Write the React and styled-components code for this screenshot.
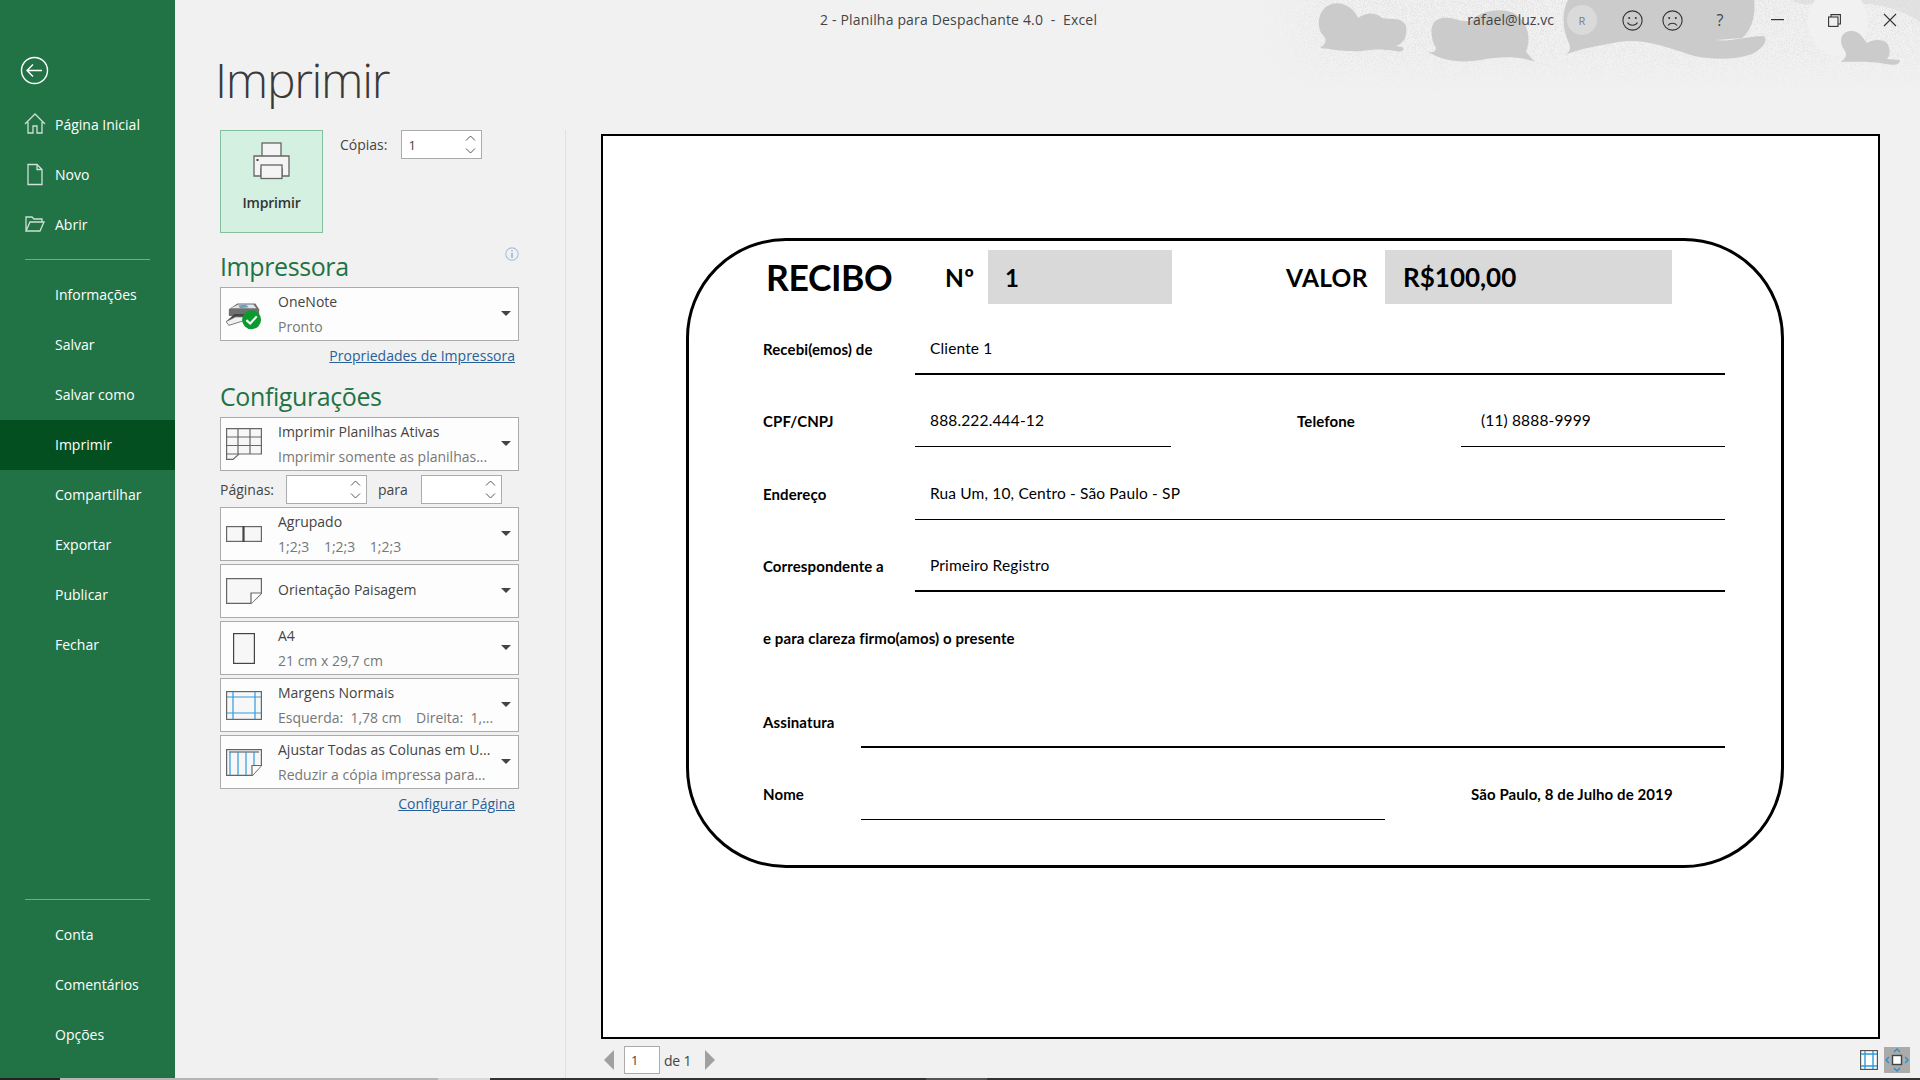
import React from "react";
import styled, { createGlobalStyle } from "styled-components";

const GlobalStyle = createGlobalStyle`
  html, body {
    margin: 0;
    padding: 0;
    background: #f1f1f1;
    overflow: hidden;
  }
  * {
    box-sizing: border-box;
  }
`;

const UI_FONT = `"Open Sans", "Noto Sans", sans-serif`;
const SHEET_FONT = `"Lato", "Liberation Sans", sans-serif`;

const Window = styled.div`
  width: 1920px;
  height: 1080px;
  display: flex;
  flex-direction: column;
  font-family: ${UI_FONT};
  color: #444;
  background: #f1f1f1;
`;

const Main = styled.div`
  flex: 1;
  display: flex;
  min-height: 0;
`;

const TaskStrip = styled.div`
  height: 2px;
  display: flex;
  background: #333;
`;

const StripPart = styled.div`
  width: ${(p) => p.$width}px;
  background: ${(p) => p.$color};
`;

/* sidebar */
const Sidebar = styled.nav`
  width: 175px;
  flex: none;
  display: flex;
  flex-direction: column;
  background: #217346;
  padding-bottom: 18px;
`;

const BackButton = styled.div`
  height: 100px;
  padding: 56px 0 0 20px;
  color: #fff;
`;

const NavRow = styled.div`
  height: 50px;
  display: flex;
  align-items: center;
  position: relative;
  padding: 0 0 2px 55px;
  font-size: 14px;
  color: #fff;
  background: ${(p) => (p.$active ? "#034f20" : "transparent")};
`;

const NavIcon = styled.svg`
  position: absolute;
  left: 24px;
  top: 12px;
`;

const NavDivider = styled.div`
  height: 1px;
  background: #72ab8b;
  margin: ${(p) => p.$margin};
`;

const BottomNav = styled.div`
  margin-top: auto;
`;

/* content */
const Content = styled.div`
  flex: 1;
  display: flex;
  flex-direction: column;
  position: relative;
  min-width: 0;
`;

const CloudArt = styled.svg`
  position: absolute;
  top: 0;
  right: 0;
`;

const TitleBar = styled.header`
  height: 40px;
  display: flex;
  align-items: center;
  position: relative;
  padding: 0 2px 0 645px;
  font-size: 14px;
  letter-spacing: 0.17px;
`;

const WindowTitle = styled.div`
  white-space: pre;
  margin-bottom: 2px;
`;

const TitleActions = styled.div`
  margin-left: auto;
  display: flex;
  align-items: center;
`;

const Account = styled.div`
  margin: 0 13px 2px 0;
  font-size: 14px;
  letter-spacing: 0.05px;
`;

const Avatar = styled.div`
  width: 30px;
  height: 30px;
  border-radius: 50%;
  background: #dadada;
  color: #6f8296;
  font-size: 11px;
  display: flex;
  align-items: center;
  justify-content: center;
`;

const TitleAction = styled.div`
  width: ${(p) => p.$width}px;
  margin-left: ${(p) => p.$left || 0}px;
  height: 30px;
  display: flex;
  align-items: center;
  justify-content: center;
  color: #444;
  font-size: 16px;
`;

const PageHeading = styled.h1`
  height: 90px;
  margin: 0;
  padding: 10px 0 0 40px;
  font-size: 48px;
  line-height: 60px;
  font-weight: 300;
  letter-spacing: -1.3px;
  color: #3a3a3a;
`;

const Body = styled.div`
  flex: 1;
  display: flex;
  min-height: 0;
`;

const Settings = styled.section`
  width: 391px;
  flex: none;
  padding-left: 45px;
  border-right: 1px solid #e1e1e1;
`;

const PrintRow = styled.div`
  display: flex;
  gap: 17px;
`;

const PrintButton = styled.div`
  width: 103px;
  height: 103px;
  background: #d3f0e0;
  border: 1px solid #86bfa0;
  display: flex;
  flex-direction: column;
  align-items: center;
  padding-top: 11px;
  font-size: 14px;
  font-weight: 600;
  letter-spacing: -0.2px;
  color: #333;
`;

const PrintLabel = styled.div`
  margin-top: 13px;
`;

const CopiesField = styled.div`
  display: flex;
  align-items: center;
  gap: 14px;
  height: 29px;
  font-size: 14px;
`;

const SpinBox = styled.div`
  width: ${(p) => p.$width || 81}px;
  height: 29px;
  background: #fff;
  border: 1px solid #ababab;
  display: flex;
  align-items: center;
  justify-content: space-between;
  padding: 0 5px 0 6px;
  font-size: 13px;
  color: #444;
`;

const SpinArrows = styled.div`
  display: flex;
  flex-direction: column;
  gap: 7px;
`;

const SectionHead = styled.div`
  width: 299px;
  height: ${(p) => p.$height}px;
  padding-bottom: 3px;
  display: flex;
  justify-content: space-between;
  align-items: flex-end;
  position: relative;
`;

const SectionTitle = styled.h2`
  margin: 0;
  font-size: 25px;
  line-height: 36px;
  font-weight: 400;
  letter-spacing: -0.4px;
  color: #217346;
`;

const InfoBadge = styled.svg`
  position: absolute;
  right: 0;
  top: 14px;
`;

const DropList = styled.div`
  display: flex;
  flex-direction: column;
  gap: 3px;
`;

const DropBox = styled.div`
  width: 299px;
  height: 54px;
  background: #fdfdfd;
  border: 1px solid #ababab;
  display: flex;
  align-items: center;
  position: relative;
  padding-left: 57px;
`;

const DropIcon = styled.div`
  position: absolute;
  left: 5px;
  top: 0;
  bottom: 0;
  width: 36px;
  display: flex;
  align-items: center;
  justify-content: center;
`;

const DropText = styled.div`
  display: flex;
  flex-direction: column;
  gap: 5px;
  font-size: 14px;
  line-height: 20px;
  white-space: pre;
`;

const DropTitle = styled.div`
  color: #444;
  &:only-child {
    margin-top: -3px;
  }
`;

const DropSub = styled.div`
  color: #777;
`;

const Caret = styled.div`
  position: absolute;
  right: 7px;
  top: 23px;
  width: 0;
  height: 0;
  border-left: 5px solid transparent;
  border-right: 5px solid transparent;
  border-top: 5px solid #444;
`;

const LinkRow = styled.div`
  width: 299px;
  height: 30px;
  display: flex;
  justify-content: flex-end;
  align-items: center;
  padding: 0 4px 2px 0;
`;

const TextLink = styled.a`
  font-size: 14px;
  color: #2b5f97;
  text-decoration: underline;
`;

const PagesRow = styled.div`
  width: 282px;
  height: 29px;
  margin: 4px 0 3px;
  display: flex;
  align-items: center;
  font-size: 14px;
`;

const PagesLabel = styled.span`
  width: ${(p) => p.$width}px;
  padding-left: ${(p) => p.$pad || 0}px;
`;

/* preview */
const Preview = styled.section`
  flex: 1;
  min-width: 0;
  padding: 4px 40px 0 35px;
  display: flex;
  flex-direction: column;
`;

const SheetPage = styled.div`
  height: 905px;
  flex: none;
  background: #fff;
  border: 2px solid #000;
  padding: 102px 0 0 83px;
  font-family: ${SHEET_FONT};
  color: #000;
`;

const Receipt = styled.div`
  width: 1098px;
  height: 630px;
  border: 3px solid #000;
  border-radius: 100px;
  padding: 9px 56px 0 74px;
`;

const ReceiptHead = styled.div`
  height: 54px;
  display: grid;
  grid-template-columns: 182px 43px 184px 114px 99px 287px;
  align-items: center;
  font-weight: 700;
`;

const ReceiptTitle = styled.div`
  font-size: 35.5px;
  letter-spacing: -0.4px;
  padding-left: 3px;
`;

const HeadLabel = styled.div`
  font-size: 24.5px;
  letter-spacing: 0.3px;
`;

const GreyValue = styled.div`
  height: 54px;
  background: #d9d9d9;
  display: flex;
  align-items: center;
  padding-left: ${(p) => p.$pad}px;
  font-size: ${(p) => p.$size}px;
`;

const FormRow = styled.div`
  display: grid;
  grid-template-columns: ${(p) => p.$columns};
  margin-top: ${(p) => p.$top}px;
`;

const FieldLabel = styled.div`
  height: 50px;
  line-height: 48px;
  font-size: 15px;
  letter-spacing: 0.1px;
  font-weight: 700;
  white-space: nowrap;
`;

const FieldValue = styled.div`
  height: 50px;
  line-height: ${(p) => 48 - (p.$weight || 1)}px;
  padding-left: ${(p) => p.$pad || 15}px;
  font-size: 15.5px;
  letter-spacing: 0.15px;
  border-bottom: ${(p) => p.$weight || 1}px solid #000;
`;

const PreviewFooter = styled.div`
  flex: 1;
  margin-right: -35px;
  display: flex;
  align-items: center;
  padding: 3px 0 0 3px;
  font-size: 14px;
`;

const PageArrow = styled.div`
  width: 0;
  height: 0;
  border-top: 10px solid transparent;
  border-bottom: 10px solid transparent;
  ${(p) => (p.$dir === "left" ? "border-right: 10px solid #a0a0a0;" : "border-left: 10px solid #a0a0a0;")}
`;

const PageInput = styled.div`
  width: 36px;
  height: 28px;
  margin: 0 4px 0 10px;
  background: #fff;
  border: 1px solid #ababab;
  padding-left: 6px;
  line-height: 26px;
  font-size: 13px;
`;

const PageCount = styled.div`
  width: 41px;
  letter-spacing: -0.2px;
`;

const ViewButtons = styled.div`
  margin-left: auto;
  display: flex;
  align-items: center;
  gap: 6px;
  padding-right: 5px;
`;

const ViewToggle = styled.div`
  width: 26px;
  height: 26px;
  background: ${(p) => (p.$active ? "#ababab" : "transparent")};
  display: flex;
  align-items: center;
  justify-content: center;
`;

const BackIcon = () => (
  <svg width="29" height="29" viewBox="0 0 29 29" fill="none" stroke="#fff" strokeWidth="1.4">
    <circle cx="14.5" cy="14.5" r="13" />
    <path d="M7 14.5h15M13 8.5l-6 6 6 6" />
  </svg>
);

const HomeIcon = () => (
  <NavIcon width="22" height="24" viewBox="0 0 22 24" fill="none" stroke="#cfe0d6" strokeWidth="1.3">
    <path d="M1 12L11 2l10 10M4 10v11h5v-7h4v7h5V10" />
  </NavIcon>
);

const NewIcon = () => (
  <NavIcon width="22" height="24" viewBox="0 0 22 24" fill="none" stroke="#cfe0d6" strokeWidth="1.3">
    <path d="M4 2.5h9l5 5v15H4zM13 2.5v5h5" />
  </NavIcon>
);

const OpenIcon = () => (
  <NavIcon width="22" height="24" viewBox="0 0 22 24" fill="none" stroke="#cfe0d6" strokeWidth="1.3">
    <path d="M2 19V5h6l2 2h8v3M2 19l4-9h14l-4 9z" />
  </NavIcon>
);

const SpinUp = () => (
  <svg width="11" height="6" viewBox="0 0 11 6" fill="none" stroke="#555" strokeWidth="1">
    <path d="M1 5.5l4.5-4.5 4.5 4.5" />
  </svg>
);

const SpinDown = () => (
  <svg width="11" height="6" viewBox="0 0 11 6" fill="none" stroke="#555" strokeWidth="1">
    <path d="M1 .5l4.5 4.5 4.5-4.5" />
  </svg>
);

const Spin = () => (
  <SpinArrows>
    <SpinUp />
    <SpinDown />
  </SpinArrows>
);

const PrinterBig = () => (
  <svg width="38" height="38" viewBox="0 0 38 38" fill="#f4f4f4" stroke="#666" strokeWidth="1.3">
    <rect x="9" y="1" width="19" height="14" />
    <path d="M1 14h35v20h-7V27H8v7H1z" />
    <rect x="8" y="23" width="21" height="13.5" />
    <rect x="3.5" y="17" width="2" height="2" fill="#444" stroke="none" />
  </svg>
);

const InfoIcon = () => (
  <InfoBadge width="14" height="14" viewBox="0 0 14 14" fill="none">
    <circle cx="7" cy="7" r="6.2" stroke="#a9c4e4" strokeWidth="1.2" />
    <path d="M7 3.2v1.4M7 6v5" stroke="#7d9fca" strokeWidth="1.2" />
  </InfoBadge>
);

const OneNotePrinter = () => (
  <svg width="38" height="32" viewBox="0 0 38 32">
    <path d="M3 11l9-6h19l4 6v7H3z" fill="#6f6f6f" />
    <path d="M5 10l8-4h16l3 4z" fill="#dfe6ec" />
    <path d="M13 7l8-1 3 3-9 1z" fill="#6d9ec7" />
    <path d="M1 23l8-7h22v6z" fill="#444" />
    <path d="M0 24l10-5h9v4L3 28z" fill="#f0f0f0" stroke="#555" strokeWidth=".8" />
    <circle cx="27" cy="22" r="10" fill="#0a9a2f" />
    <path d="M21.5 22.5l4 3.5 7-7.5" fill="none" stroke="#fff" strokeWidth="2.2" />
  </svg>
);

const SheetIcon = () => (
  <svg width="36" height="32" viewBox="0 0 36 32" fill="#f7f7f7" stroke="#666" strokeWidth="1.2">
    <path d="M.6.6h34.8v25.4H13l-6 5.4H.6z" />
    <path d="M.6 9h34.8M.6 17.5h34.8M.6 26H13M12 .6V26M24 .6V26" fill="none" />
  </svg>
);

const CollatedIcon = () => (
  <svg width="36" height="16" viewBox="0 0 36 16" fill="#f7f7f7" stroke="#666" strokeWidth="1.2">
    <rect x=".6" y=".6" width="34.8" height="14.8" />
    <path d="M17.5 0v16" strokeWidth="2.2" stroke="#444" />
  </svg>
);

const LandscapeIcon = () => (
  <svg width="36" height="26" viewBox="0 0 36 26" fill="#f7f7f7" stroke="#666" strokeWidth="1.2">
    <path d="M.6.6h34.8v15L25 25.4H.6z" />
    <path d="M35.4 15H25v10.4" fill="#fff" />
  </svg>
);

const PortraitIcon = () => (
  <svg width="22" height="31" viewBox="0 0 22 31" fill="#f7f7f7" stroke="#444" strokeWidth="1.2">
    <rect x=".6" y=".6" width="20.8" height="29.8" />
  </svg>
);

const MarginsIcon = () => (
  <svg width="36" height="29" viewBox="0 0 36 29" fill="#f7f7f7" stroke="#666" strokeWidth="1.2">
    <rect x=".6" y=".6" width="34.8" height="27.8" />
    <path d="M7 1v27M29 1v27M1 6h34M1 22h34" fill="none" stroke="#2e9bdc" />
  </svg>
);

const FitColumnsIcon = () => (
  <svg width="36" height="27" viewBox="0 0 36 27" fill="#f7f7f7" stroke="#666" strokeWidth="1.2">
    <path d="M.6.6h34.8v16l-9 9.8H.6z" />
    <path d="M3 3h30" fill="none" stroke="#666" />
    <path d="M4 3v23M12 3v23M20 3v23M28 3v13" fill="none" stroke="#2e9bdc" />
    <path d="M35.4 16.5H26v10" fill="#fff" />
  </svg>
);

const SmileIcon = ({ sad }) => (
  <svg width="21" height="21" viewBox="0 0 21 21" fill="none" stroke="#333" strokeWidth="1.1">
    <circle cx="10.5" cy="10.5" r="9.6" />
    <circle cx="7.2" cy="8" r="1" fill="#333" stroke="none" />
    <circle cx="13.8" cy="8" r="1" fill="#333" stroke="none" />
    <path d={sad ? "M6 15.5c2-3 7-3 9 0" : "M5.5 12.5c2 3.6 8 3.6 10 0"} />
  </svg>
);

const MinimizeIcon = () => (
  <svg width="13" height="2" viewBox="0 0 13 2">
    <rect width="13" height="1.2" fill="#333" />
  </svg>
);

const RestoreIcon = () => (
  <svg width="13" height="13" viewBox="0 0 13 13" fill="none" stroke="#333" strokeWidth="1.1">
    <rect x=".6" y="3" width="9.4" height="9.4" />
    <path d="M3 3V.6h9.4V10H10" />
  </svg>
);

const CloseIcon = () => (
  <svg width="14" height="14" viewBox="0 0 14 14" fill="none" stroke="#333" strokeWidth="1.1">
    <path d="M1 1l12 12M13 1L1 13" />
  </svg>
);

const PageViewIcon = () => (
  <svg width="18" height="20" viewBox="0 0 18 20" fill="#fff" stroke="#555" strokeWidth="1.2">
    <rect x=".6" y=".6" width="16.8" height="18.8" />
    <path d="M5 1v18M13 1v18M1 4h16M1 16h16" fill="none" stroke="#2e9bdc" strokeWidth="1.4" />
  </svg>
);

const ZoomFitIcon = () => (
  <svg width="24" height="24" viewBox="0 0 24 24" fill="none">
    <rect x="7.5" y="7.5" width="9" height="9" fill="#fff" stroke="#444" strokeWidth="1.4" />
    <path d="M9 4l3-3 3 3M9 20l3 3 3-3M4 9l-3 3 3 3M20 9l3 3-3 3" stroke="#2e8fd0" strokeWidth="1.4" />
  </svg>
);

const Clouds = () => (
  <CloudArt width="660" height="92" viewBox="-40 0 660 92">
    <defs>
      <filter id="grain" x="0" y="0" width="100%" height="100%">
        <feTurbulence type="fractalNoise" baseFrequency="1.1" numOctaves="2" seed="4" />
        <feColorMatrix values="0 0 0 0 0.78  0 0 0 0 0.78  0 0 0 0 0.78  0 0 0 9 -4.4" />
      </filter>
      <linearGradient id="fadeDown" x1="0" y1="0" x2="0" y2="1">
        <stop offset="0" stopColor="#fff" />
        <stop offset="0.55" stopColor="#fff" stopOpacity="0.8" />
        <stop offset="1" stopColor="#fff" stopOpacity="0" />
      </linearGradient>
      <linearGradient id="fadeLeft" x1="0" y1="0" x2="1" y2="0">
        <stop offset="0" stopColor="#fff" stopOpacity="0" />
        <stop offset="0.12" stopColor="#fff" />
        <stop offset="1" stopColor="#fff" />
      </linearGradient>
      <mask id="maskDown">
        <rect x="-40" width="660" height="92" fill="url(#fadeDown)" />
      </mask>
      <mask id="maskLeft">
        <rect x="-40" width="660" height="92" fill="url(#fadeLeft)" />
      </mask>
    </defs>
    <g mask="url(#maskLeft)">
      <g mask="url(#maskDown)">
        <rect x="-40" width="660" height="92" filter="url(#grain)" />
      </g>
    </g>
    <path d="M265 0H620V22C600 8 580 6 570 4H510C500 6 496 0 490 0z" fill="#d6d6d6" opacity=".5" />
    <ellipse cx="538" cy="22" rx="30" ry="34" fill="#f1f1f1" />
    <g fill="#cbcbcb">
      <path d="M20 48c6-4 8-8 2-14-6-8-4-26 10-30 10-3 22 4 26 14 8-6 18-6 24 0 6 2 20-2 24 8 2 12-4 18-10 20l6 1c4 2 0 6-6 4-14-2-22-2-34 0-18 1-30-2-42-3z" />
      <path d="M126 50c6 4 10 2 10-2-6-10-8-28 6-30 12-2 20 6 30 2 12-12 40-14 50 0 10 14 6 26 4 32l9 10c-14-6-36-6-54-2-18 3-40 2-55-10z" />
      <path d="M265 55c4-2 7-6 3-14-6-14-6-30 0-41H454c2 14-2 30-12 38l-26 2c16 2 30-4 48-4 4 4 0 12-12 18-18 6-38 6-58 2-30-10-52-18-76-14-20 4-36 6-53 13z" />
      <path d="M541 62c4-4 8-6 2-14-4-8-2-18 10-17 8 1 10 8 14 12 6-4 16-4 20 0 5 8 2 14 0 16l13 1c0 4-4 6-14 4-16-3-30-2-45-2z" />
    </g>
  </CloudArt>
);

const NAV_TOP = [
  { label: "Página Inicial", icon: <HomeIcon /> },
  { label: "Novo", icon: <NewIcon /> },
  { label: "Abrir", icon: <OpenIcon /> }
];
const NAV_MIDDLE = ["Informações", "Salvar", "Salvar como", "Imprimir", "Compartilhar", "Exportar", "Publicar", "Fechar"];
const NAV_BOTTOM = ["Conta", "Comentários", "Opções"];

const Drop = ({ icon, title, sub }) => (
  <DropBox>
    <DropIcon>{icon}</DropIcon>
    <DropText>
      <DropTitle>{title}</DropTitle>
      {sub && <DropSub>{sub}</DropSub>}
    </DropText>
    <Caret />
  </DropBox>
);

const App = () => {
  return (
    <Window>
      <GlobalStyle />
      <Main>
        <Sidebar>
          <BackButton>
            <BackIcon />
          </BackButton>
          {NAV_TOP.map((item) => (
            <NavRow key={item.label}>
              {item.icon}
              {item.label}
            </NavRow>
          ))}
          <NavDivider $margin="9px 25px 10px" />
          {NAV_MIDDLE.map((label) => (
            <NavRow key={label} $active={label === "Imprimir"}>
              {label}
            </NavRow>
          ))}
          <BottomNav>
            <NavDivider $margin="0 25px 10px" />
            {NAV_BOTTOM.map((label) => (
              <NavRow key={label}>{label}</NavRow>
            ))}
          </BottomNav>
        </Sidebar>

        <Content>
          <Clouds />
          <TitleBar>
            <WindowTitle>{"2 - Planilha para Despachante 4.0  -  Excel"}</WindowTitle>
            <TitleActions>
              <Account>rafael@luz.vc</Account>
              <Avatar>R</Avatar>
              <TitleAction $width={40} $left={15}>
                <SmileIcon />
              </TitleAction>
              <TitleAction $width={40}>
                <SmileIcon sad />
              </TitleAction>
              <TitleAction $width={46} $left={5}>?</TitleAction>
              <TitleAction $width={56} $left={6}>
                <MinimizeIcon />
              </TitleAction>
              <TitleAction $width={56} $left={1}>
                <RestoreIcon />
              </TitleAction>
              <TitleAction $width={56}>
                <CloseIcon />
              </TitleAction>
            </TitleActions>
          </TitleBar>

          <PageHeading>Imprimir</PageHeading>

          <Body>
            <Settings>
              <PrintRow>
                <PrintButton>
                  <PrinterBig />
                  <PrintLabel>Imprimir</PrintLabel>
                </PrintButton>
                <CopiesField>
                  Cópias:
                  <SpinBox>
                    1
                    <Spin />
                  </SpinBox>
                </CopiesField>
              </PrintRow>

              <SectionHead $height={54}>
                <SectionTitle>Impressora</SectionTitle>
                <InfoIcon />
              </SectionHead>
              <Drop icon={<OneNotePrinter />} title="OneNote" sub="Pronto" />
              <LinkRow>
                <TextLink>Propriedades de Impressora</TextLink>
              </LinkRow>

              <SectionHead $height={46}>
                <SectionTitle>Configurações</SectionTitle>
              </SectionHead>
              <Drop icon={<SheetIcon />} title="Imprimir Planilhas Ativas" sub="Imprimir somente as planilhas..." />
              <PagesRow>
                <PagesLabel $width={66}>Páginas:</PagesLabel>
                <SpinBox>
                  <span />
                  <Spin />
                </SpinBox>
                <PagesLabel $width={54} $pad={11}>para</PagesLabel>
                <SpinBox>
                  <span />
                  <Spin />
                </SpinBox>
              </PagesRow>
              <DropList>
                <Drop icon={<CollatedIcon />} title="Agrupado" sub={"1;2;3    1;2;3    1;2;3"} />
                <Drop icon={<LandscapeIcon />} title="Orientação Paisagem" />
                <Drop icon={<PortraitIcon />} title="A4" sub="21 cm x 29,7 cm" />
                <Drop icon={<MarginsIcon />} title="Margens Normais" sub={"Esquerda:  1,78 cm    Direita:  1,..."} />
                <Drop icon={<FitColumnsIcon />} title="Ajustar Todas as Colunas em U..." sub="Reduzir a cópia impressa para..." />
              </DropList>
              <LinkRow>
                <TextLink>Configurar Página</TextLink>
              </LinkRow>
            </Settings>

            <Preview>
              <SheetPage>
                <Receipt>
                  <ReceiptHead>
                    <ReceiptTitle>RECIBO</ReceiptTitle>
                    <HeadLabel>Nº</HeadLabel>
                    <GreyValue $pad={17} $size={24}>1</GreyValue>
                    <span />
                    <HeadLabel>VALOR</HeadLabel>
                    <GreyValue $pad={18} $size={26}>R$100,00</GreyValue>
                  </ReceiptHead>

                  <FormRow $columns="152px 810px" $top={21}>
                    <FieldLabel>Recebi(emos) de</FieldLabel>
                    <FieldValue $weight={2}>Cliente 1</FieldValue>
                  </FormRow>
                  <FormRow $columns="152px 256px 126px 164px 264px" $top={22}>
                    <FieldLabel>CPF/CNPJ</FieldLabel>
                    <FieldValue>888.222.444-12</FieldValue>
                    <span />
                    <FieldLabel>Telefone</FieldLabel>
                    <FieldValue $pad={20}>(11) 8888-9999</FieldValue>
                  </FormRow>
                  <FormRow $columns="152px 810px" $top={23}>
                    <FieldLabel>Endereço</FieldLabel>
                    <FieldValue>Rua Um, 10, Centro - São Paulo - SP</FieldValue>
                  </FormRow>
                  <FormRow $columns="152px 810px" $top={22}>
                    <FieldLabel>Correspondente a</FieldLabel>
                    <FieldValue $weight={2}>Primeiro Registro</FieldValue>
                  </FormRow>
                  <FormRow $columns="1fr" $top={22}>
                    <FieldLabel>e para clareza firmo(amos) o presente</FieldLabel>
                  </FormRow>
                  <FormRow $columns="98px 864px" $top={34}>
                    <FieldLabel>Assinatura</FieldLabel>
                    <FieldValue $weight={2} />
                  </FormRow>
                  <FormRow $columns="98px 524px 86px 254px" $top={22}>
                    <FieldLabel>Nome</FieldLabel>
                    <FieldValue />
                    <span />
                    <FieldLabel>São Paulo, 8 de Julho de 2019</FieldLabel>
                  </FormRow>
                </Receipt>
              </SheetPage>

              <PreviewFooter>
                <PageArrow $dir="left" />
                <PageInput>1</PageInput>
                <PageCount>de 1</PageCount>
                <PageArrow $dir="right" />
                <ViewButtons>
                  <PageViewIcon />
                  <ViewToggle $active>
                    <ZoomFitIcon />
                  </ViewToggle>
                </ViewButtons>
              </PreviewFooter>
            </Preview>
          </Body>
        </Content>
      </Main>
      <TaskStrip>
        <StripPart $width={60} $color="#222" />
        <StripPart $width={378} $color="#b5b5b5" />
        <StripPart $width={52} $color="#d8d8d8" />
        <StripPart $width={436} $color="#333" />
        <StripPart $width={61} $color="#555" />
      </TaskStrip>
    </Window>
  );
};

export default App;
